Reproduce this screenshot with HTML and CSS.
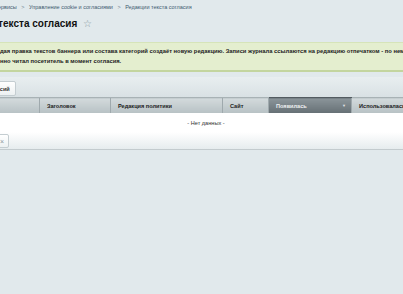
FILE: index.html
```html
<!DOCTYPE html>
<html lang="ru">
<head>
  <meta charset="UTF-8">
  <title>Редакции текста согласия</title>
  <link rel="stylesheet" href="styles.css">
</head>
<body>
  <div class="page">
    <div class="breadcrumbs">
      <a href="#">Сервисы</a>
      <span class="sep">&gt;</span>
      <a href="#">Управление cookie и согласиями</a>
      <span class="sep">&gt;</span>
      <a href="#">Редакции текста согласия</a>
    </div>

    <h1 class="title">Редакции текста согласия <span class="star">☆</span></h1>

    <div class="notice">
      Каждая правка текстов баннера или состава категорий создаёт новую редакцию. Записи журнала ссылаются на редакцию отпечатком - по нему видно, что<br>
      именно читал посетитель в момент согласия.
    </div>

    <div class="toolbar">
      <button class="btn">История версий</button>
    </div>

    <table class="list">
      <thead>
        <tr>
          <th class="c1">Отпечаток</th>
          <th class="c2">Заголовок</th>
          <th class="c3">Редакция политики</th>
          <th class="c4">Сайт</th>
          <th class="c5 sorted">Появилась <span class="arrow">▼</span></th>
          <th class="c6">Использовалась</th>
        </tr>
      </thead>
      <tbody>
        <tr>
          <td colspan="6" class="empty">- Нет данных -</td>
        </tr>
      </tbody>
    </table>

    <div class="list-footer">
      <button class="btn btn-small">×</button>
    </div>
  </div>
</body>
</html>
```

FILE: styles.css
```css
html, body {
  margin: 0;
  padding: 0;
  background: #e1e9ec;
  font-family: "Liberation Sans", Arial, sans-serif;
  overflow: hidden;
}

.page {
  margin-left: -60px;
  width: 560px;
}

.breadcrumbs {
  padding: 4px 0 0 54px;
  height: 10px;
  font-size: 5.5px;
  line-height: 6px;
  color: #3f5a70;
  white-space: nowrap;
}
.breadcrumbs a {
  color: #3f5a70;
  text-decoration: none;
}
.breadcrumbs .sep {
  margin: 0 3px;
  color: #6e8191;
}

.title {
  margin: 0;
  padding: 3px 0 0 8px;
  height: 25px;
  font-size: 10px;
  line-height: 13px;
  font-weight: bold;
  color: #111;
  white-space: nowrap;
}
.title .star {
  font-weight: normal;
  color: #8a9aa3;
  font-size: 10px;
  margin-left: 3px;
}

.notice {
  margin-left: 40px;
  padding: 4px 0 4px 9px;
  background: #e4eecf;
  border-top: 1px solid #d6e4b9;
  border-bottom: 2px solid #c3d59f;
  font-size: 5.8px;
  line-height: 9.5px;
  font-weight: bold;
  color: #222;
  white-space: nowrap;
}

.toolbar {
  display: flex;
  margin-top: 5px;
  padding: 4px 0 1px 0;
  background: linear-gradient(#e8eef0, #d9e1e4);
}

.btn {
  font-family: "Liberation Sans", Arial, sans-serif;
  font-size: 5.6px;
  font-weight: bold;
  color: #333;
  background: linear-gradient(#ffffff, #edf1f2);
  border: 1px solid #c4cdd1;
  border-radius: 2px;
  height: 15px;
  padding: 0 5px;
  margin-left: 19px;
}

.list {
  border-collapse: collapse;
  table-layout: fixed;
  width: 492px;
  margin-left: 20px;
}

.list th {
  height: 15px;
  padding: 0 0 0 7px;
  text-align: left;
  font-size: 5.6px;
  font-weight: bold;
  color: #222;
  background: linear-gradient(#d3dadc, #b7c1c4);
  border-left: 1px solid #9fa9ad;
  border-top: 1px solid #a8b2b5;
  white-space: nowrap;
  overflow: hidden;
}
.list th.c1 { width: 72px; border-left: none; }
.list th.c2 { width: 63px; }
.list th.c3 { width: 104px; }
.list th.c4 { width: 38px; }
.list th.c5 { width: 75px; }
.list th.c6 { width: 93px; }

.list th.sorted {
  color: #eef0f1;
  background: linear-gradient(#8b959a, #656f74);
  border-top-color: #525b60;
}
.list th .arrow {
  float: right;
  margin-right: 5px;
  font-size: 4px;
  color: #e0e4e6;
}

.list td.empty {
  height: 19px;
  background: #fff;
  text-align: center;
  font-size: 5.6px;
  color: #333;
  padding: 0;
}

.list-footer {
  display: flex;
  align-items: flex-start;
  margin-left: 20px;
  width: 492px;
  height: 15px;
  padding-top: 2px;
  background: linear-gradient(#ffffff, #e6ecee);
  border-bottom: 1px solid #c3cbce;
}

.btn-small {
  margin-left: 35px;
  height: 14px;
  width: 14px;
  padding: 0;
  font-size: 7px;
  color: #8d979b;
  font-weight: normal;
}
```
